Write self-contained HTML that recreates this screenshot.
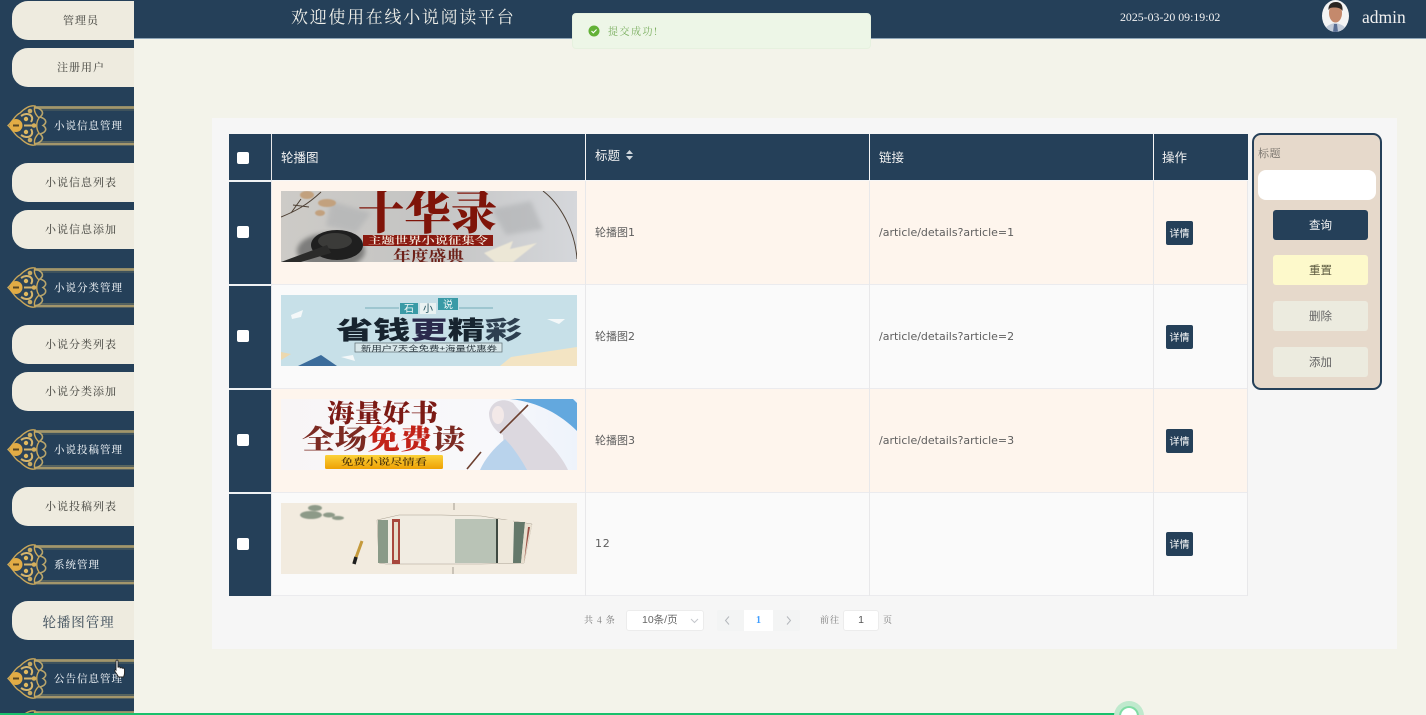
<!DOCTYPE html>
<html lang="zh"><head><meta charset="utf-8"><title>轮播图管理</title>
<style>
*{box-sizing:border-box}
html,body{margin:0;padding:0;width:1426px;height:715px;overflow:hidden;background:#f3f3ea;font-family:"Liberation Sans","Noto Sans CJK SC",sans-serif}
#root{position:relative;width:1426px;height:715px;overflow:hidden;background:#f3f3ea}
.a{position:absolute}
#side{left:0;top:0;width:134px;height:715px;background:#254059;overflow:hidden}
.pill{position:absolute;left:12px;width:122px;height:39px;background:#eeebdf;border-radius:16px 0 0 16px;text-align:center;padding-left:16px;font:500 11px/38px "Noto Serif CJK SC",serif;color:#55554f;letter-spacing:1px}
.orn{position:absolute;left:7px;width:127px;height:42px}
.orn span{position:absolute;left:47px;top:0;font:500 10.5px/41px "Noto Serif CJK SC",serif;color:#e9eef2;letter-spacing:1px;white-space:nowrap}
#head{left:134px;top:0;width:1292px;height:39px;background:#254059;border-bottom:1px solid #8fa6b8}
.th{position:absolute;top:134px;height:46px;background:#254059;color:#f1f1f1;font-size:12.5px;line-height:48px;padding-left:8px}
.rowbg{position:absolute;left:272px;width:976px;height:103px}
.sq{position:absolute;left:237px;width:12px;height:12px;background:#fff;border-radius:2px}
.cell{position:absolute;font:11px/16px "DejaVu Sans","Noto Sans CJK SC",sans-serif;color:#5e5e5e}
.det{position:absolute;left:1166px;width:27px;height:24px;background:#254059;border-radius:2px;color:#fff;font-size:10px;line-height:27px;text-align:center}
.btn{position:absolute;left:1273px;width:95px;height:30px;border-radius:3px;text-align:center;font-size:11.5px;line-height:32px}
.vl{position:absolute;width:1px;background:#e8e8ea}
</style></head><body><div id="root">

<svg width="0" height="0" style="position:absolute"><defs>
<g id="o" fill="none">
<path d="M27 2.500H127M27 39H127" stroke="#a3966b" stroke-width="2.800"/>
<path d="M33 5H127M33 36.500H127" stroke="#57655f" stroke-width="1"/>
<path d="M28 2C35 4 38 8 33 12C40 14 40 18 36 20.500C40 23 40 27 33 29C38 33 35 37 28 39" stroke="#b8a56c" stroke-width="1.600"/>
<path d="M1 20.500C6 16 8 10 13 8C18 3 23 0 28 1C26 6 29 10 32 13C29 17 29 24 32 28C29 31 26 35 28 40C23 41 18 38 13 33C8 31 6 25 1 20.500Z" fill="#2c4459" stroke="#c9a75a" stroke-width="1.400"/>
<circle cx="9" cy="20.500" r="6.500" fill="#e2ac45"/><rect x="6" y="19.500" width="6" height="2" fill="#5a4724"/>
<path d="M14 11C21 6 28 11 24 17M14 30C21 35 28 30 24 24M17 20.500H27" stroke="#d6b56c" stroke-width="2"/>
<circle cx="23" cy="6" r="2.300" fill="#c9ab62"/><circle cx="23" cy="35" r="2.300" fill="#c9ab62"/><circle cx="27" cy="20.500" r="2.300" fill="#d5af5c"/><circle cx="19" cy="14" r="2.200" fill="#e0b95f"/><circle cx="19" cy="27" r="2.200" fill="#e0b95f"/>
</g></defs></svg>

<div class="a" id="side">
<div class="pill" style="top:1px;line-height:39px">管理员</div>
<div class="pill" style="top:48px">注册用户</div>
<div class="orn" style="top:105px"><svg width="127" height="42"><use href="#o"/></svg><span>小说信息管理</span></div>
<div class="pill" style="top:163px">小说信息列表</div>
<div class="pill" style="top:210px">小说信息添加</div>
<div class="orn" style="top:267px"><svg width="127" height="42"><use href="#o"/></svg><span>小说分类管理</span></div>
<div class="pill" style="top:325px">小说分类列表</div>
<div class="pill" style="top:372px">小说分类添加</div>
<div class="orn" style="top:429px"><svg width="127" height="42"><use href="#o"/></svg><span>小说投稿管理</span></div>
<div class="pill" style="top:487px">小说投稿列表</div>
<div class="orn" style="top:544px"><svg width="127" height="42"><use href="#o"/></svg><span>系统管理</span></div>
<div class="pill" style="top:601px;font-size:13.500px;letter-spacing:.9px;color:#4d5b66;padding-left:11px;line-height:40px">轮播图管理</div>
<div class="orn" style="top:658px"><svg width="127" height="42"><use href="#o"/></svg><span>公告信息管理</span></div>
<div class="orn" style="top:710px;height:5px;overflow:hidden"><svg width="127" height="5" style="display:block"><use href="#o"/></svg></div>
</div>

<div class="a" id="head"></div>
<div class="a" style="left:291px;top:3px;font:17px/26px 'Noto Serif CJK SC',serif;color:#f0f0ea;letter-spacing:1.700px;white-space:nowrap">欢迎使用在线小说阅读平台</div>
<div class="a" style="left:1120px;top:9px;font:11.850px/17px 'Liberation Serif',serif;color:#f2f2f2;white-space:nowrap">2025-03-20 09:19:02</div>
<svg class="a" style="left:1322px;top:0" width="27" height="32" viewBox="0 0 27 32">
<defs><clipPath id="av"><ellipse cx="13.500" cy="16" rx="13.500" ry="16"/></clipPath></defs>
<rect width="27" height="32" fill="#f4f4f4" clip-path="url(#av)"/>
<g clip-path="url(#av)"><ellipse cx="13.500" cy="13" rx="6.500" ry="9.500" fill="#c4896c"/><path d="M6.500 10C6 4 10 2 14 2C19 2 21 5 20.500 11C19 7 11 7 8 8Z" fill="#2b2522"/><path d="M2 32C3 26 8 24 13 23C19 24 24 26 25 32Z" fill="#c3ccd9"/><path d="M12 24H15L16 32H11Z" fill="#5a6f94"/></g></svg>
<div class="a" style="left:1362px;top:5px;font:17.500px/24px 'Liberation Serif',serif;color:#f0f0f0">admin</div>

<div class="a" style="left:212px;top:118px;width:1185px;height:531px;background:#f6f6f6"></div>

<div class="a" style="left:229px;top:134px;width:43px;height:462px;background:#254059"></div>
<div class="a" style="left:229px;top:180px;width:43px;height:2px;background:#f0f2f4"></div>
<div class="a" style="left:229px;top:284px;width:43px;height:2px;background:#f0f2f4"></div>
<div class="a" style="left:229px;top:388px;width:43px;height:2px;background:#f0f2f4"></div>
<div class="a" style="left:229px;top:492px;width:43px;height:2px;background:#f0f2f4"></div>
<div class="a" style="left:271px;top:134px;width:1px;height:462px;background:#e8e8ea"></div>

<div class="th" style="left:272px;width:313px;padding-left:9px">轮播图</div>
<div class="th" style="left:586px;width:283px;line-height:45px;padding-left:9px">标题 <svg width="9" height="10" viewBox="0 0 9 10" style="margin-left:2px"><path d="M4.500 0L8 4H1ZM4.500 10L1 6H8Z" fill="#cfd6dc"/></svg></div>
<div class="th" style="left:870px;width:283px;padding-left:9px">链接</div>
<div class="th" style="left:1154px;width:94px">操作</div>

<div class="rowbg" style="top:181px;background:#fef5ed"></div>
<div class="rowbg" style="top:285px;background:#fafafa"></div>
<div class="rowbg" style="top:389px;background:#fef5ed"></div>
<div class="rowbg" style="top:493px;background:#fafafa"></div>
<div class="a" style="left:272px;top:284px;width:976px;height:1px;background:#ebebee"></div>
<div class="a" style="left:272px;top:388px;width:976px;height:1px;background:#ebebee"></div>
<div class="a" style="left:272px;top:492px;width:976px;height:1px;background:#ebebee"></div>
<div class="a" style="left:272px;top:595px;width:976px;height:1px;background:#ebebee"></div>
<div class="vl" style="left:585px;top:181px;height:415px"></div>
<div class="vl" style="left:869px;top:181px;height:415px"></div>
<div class="vl" style="left:1153px;top:181px;height:415px"></div>
<div class="vl" style="left:1247px;top:181px;height:415px"></div>

<div class="sq" style="top:152px"></div><div class="sq" style="top:226px"></div><div class="sq" style="top:330px"></div><div class="sq" style="top:434px"></div><div class="sq" style="top:538px"></div>

<!-- banner 1 -->
<svg class="a" style="left:281px;top:191px" width="296" height="71" viewBox="0 0 296 71">
<defs><linearGradient id="g1" x1="0" x2="1"><stop offset="0" stop-color="#cdcbc7"/><stop offset=".5" stop-color="#c4c4c3"/><stop offset="1" stop-color="#d5d7db"/></linearGradient><filter id="bl"><feGaussianBlur stdDeviation="2.500"/></filter><filter id="bl1"><feGaussianBlur stdDeviation=".6"/></filter></defs>
<rect width="296" height="71" fill="url(#g1)"/>
<path d="M50 10L90 22L75 42L45 35ZM210 18L250 10L262 38L225 44Z" fill="#aeb0b2" opacity=".6" filter="url(#bl)"/>
<path d="M0 26C15 20 26 14 40 1M12 14L28 16M20 8L10 22M262 0C278 12 294 38 296 68" stroke="#4e4034" stroke-width="1" fill="none"/>
<g fill="#c2a17e" filter="url(#bl1)"><ellipse cx="26" cy="4" rx="7" ry="4"/><ellipse cx="46" cy="12" rx="9" ry="4"/><ellipse cx="39" cy="22" rx="5" ry="3"/></g>
<ellipse cx="50" cy="60" rx="34" ry="18" fill="#7d7d7b" filter="url(#bl)"/><ellipse cx="56" cy="54" rx="26" ry="15" fill="#1f1f1f"/><ellipse cx="54" cy="50" rx="17" ry="8" fill="#3b3b39"/>
<path d="M0 71L46 54L50 62L20 71Z" fill="#2b2b2a"/>
<text x="77" y="38" font-family="'Noto Serif CJK SC',serif" font-weight="900" font-size="46" fill="#7f1409" textLength="139" lengthAdjust="spacingAndGlyphs">十华录</text>
<rect x="82" y="44" width="130" height="11" fill="#8a1a10"/>
<text x="147" y="53" text-anchor="middle" font-family="'Noto Serif CJK SC',serif" font-size="10" font-weight="600" fill="#f5eee2" textLength="120" lengthAdjust="spacingAndGlyphs">主题世界小说征集令</text>
<text x="112" y="71" font-family="'Noto Serif CJK SC',serif" font-weight="700" font-size="16" fill="#6d2018" textLength="71" lengthAdjust="spacingAndGlyphs">年度盛典</text>
<path d="M203 62L232 50L229 58L256 52L232 71H214Z" fill="#ece7d6" filter="url(#bl1)"/>
</svg>

<!-- banner 2 -->
<svg class="a" style="left:281px;top:295px" width="296" height="71" viewBox="0 0 296 71">
<rect width="296" height="71" fill="#c7e0e8"/>
<path d="M84 13H118M178 13H212" stroke="#5c9aa8" stroke-width=".8"/>
<rect x="119" y="8" width="18" height="11" fill="#399aa6"/><rect x="139" y="8" width="16" height="11" fill="#e9f2f2"/><rect x="157" y="3" width="20" height="12" fill="#399aa6"/>
<text x="123" y="17" font-size="10" fill="#f0f8f8" font-family="'Noto Sans CJK SC',sans-serif">石</text><text x="142" y="17" font-size="10" fill="#1d4f5c" font-family="'Noto Sans CJK SC',sans-serif">小</text><text x="162" y="13" font-size="10" fill="#f0f8f8" font-family="'Noto Sans CJK SC',sans-serif">说</text>
<text x="55" y="44" font-size="25" font-weight="900" fill="#17242f" textLength="186" lengthAdjust="spacingAndGlyphs" font-family="'Noto Sans CJK SC',sans-serif">省钱<tspan fill="#2b2a4c">更</tspan>精<tspan fill="#2e3f50">彩</tspan></text>
<rect x="74" y="48" width="147" height="9" fill="#d8e7ea" stroke="#5d6c72" stroke-width=".7"/>
<text x="148" y="56" text-anchor="middle" font-size="7.500" fill="#26343c" textLength="136" lengthAdjust="spacingAndGlyphs" font-family="'Noto Sans CJK SC',sans-serif">新用户7天全免费+海量优惠券</text>
<path d="M17 71L40 60L56 71Z" fill="#3b6c9b"/><path d="M0 57L10 59L0 65Z" fill="#ecd8ae"/>
<path d="M219 71L230 62L296 52V71Z" fill="#f3e4c3"/>
<path d="M10 20L22 15L20 22L11 24ZM266 24L284 24L278 29ZM60 62L72 60L74 66Z" fill="#f4f8f9"/>
</svg>

<!-- banner 3 -->
<svg class="a" style="left:281px;top:399px" width="296" height="71" viewBox="0 0 296 71">
<defs><linearGradient id="g3" x1="0" x2="1"><stop offset="0" stop-color="#f8f5f6"/><stop offset=".7" stop-color="#f8f8fb"/><stop offset="1" stop-color="#eef3fb"/></linearGradient><linearGradient id="gy" y1="0" y2="1" x1="0" x2="0"><stop offset="0" stop-color="#fcd23a"/><stop offset="1" stop-color="#eea105"/></linearGradient></defs>
<rect width="296" height="71" fill="url(#g3)"/>
<text x="46" y="23" font-family="'Noto Serif CJK SC',serif" font-weight="900" font-size="25" fill="#7c1a15" textLength="111" lengthAdjust="spacingAndGlyphs">海量好书</text>
<text x="21" y="50" font-family="'Noto Serif CJK SC',serif" font-weight="900" font-size="27" fill="#7c2a22" textLength="163" lengthAdjust="spacingAndGlyphs">全场<tspan fill="#c22318">免费</tspan>读</text>
<rect x="44" y="56" width="118" height="14" rx="1.500" fill="url(#gy)"/>
<text x="103" y="66" text-anchor="middle" font-family="'Noto Serif CJK SC',serif" font-size="9" font-weight="600" fill="#4a3208" textLength="86" lengthAdjust="spacingAndGlyphs">免费小说尽情看</text>
<path d="M229 0H292L296 4V32C280 16 258 3 229 0Z" fill="#63a8de"/>
<path d="M208 14C210 2 222 -2 232 4C240 14 252 26 264 40C276 52 284 64 287 71H232C228 60 222 46 222 36C214 32 208 24 208 14Z" fill="#dcd8df"/>
<path d="M199 71C204 60 212 50 224 40C232 48 240 60 246 71Z" fill="#b9d3ec"/>
<path d="M219 34L247 6M186 70L200 53" stroke="#6d4030" stroke-width="1.600"/>
<ellipse cx="217" cy="16" rx="6" ry="9" fill="#f3e9e8"/>
</svg>

<!-- banner 4 -->
<svg class="a" style="left:281px;top:503px" width="296" height="71" viewBox="0 0 296 71">
<rect width="296" height="71" fill="#f2ebdf"/>
<g fill="#8d9a88" filter="url(#bl1)"><ellipse cx="34" cy="5" rx="7" ry="3"/><ellipse cx="30" cy="12" rx="11" ry="4"/><ellipse cx="48" cy="12" rx="6" ry="2.500"/><ellipse cx="57" cy="15" rx="6" ry="2"/></g>
<path d="M96 17L118 12L160 12L200 13L251 21L243 60L200 61L105 61L98 60Z" fill="#f1ece2" stroke="#a89f90" stroke-width=".5"/>
<rect x="97" y="17" width="10" height="43" fill="#8a9a88"/><rect x="111" y="16" width="8" height="45" fill="#a8473d"/><rect x="113" y="19" width="4" height="38" fill="#e6ddcb"/>
<rect x="174" y="16" width="42" height="44" fill="#b9c3b6"/><rect x="215" y="16" width="2" height="44" fill="#3f4a42"/>
<rect x="217" y="17" width="15" height="43" fill="#eee8db"/>
<path d="M233 19H244L240 60H232Z" fill="#64786a"/>
<path d="M244 20L251 22L243 60H240Z" fill="#e8dfcf"/><path d="M247 24L249 24L243 59Z" fill="#9b5146"/>
<path d="M73 60L81 38" stroke="#c59a3c" stroke-width="3"/><path d="M73 61L75 54" stroke="#1e1e1e" stroke-width="3.500"/>
<path d="M173 0V7M172 64V71" stroke="#6d675c" stroke-width=".6"/>
</svg>

<div class="cell" style="left:595px;top:225px">轮播图1</div>
<div class="cell" style="left:595px;top:329px">轮播图2</div>
<div class="cell" style="left:595px;top:433px">轮播图3</div>
<div class="cell" style="left:595px;top:536px;letter-spacing:.8px">12</div>
<div class="cell" style="left:879px;top:225px">/article/details?article=1</div>
<div class="cell" style="left:879px;top:329px">/article/details?article=2</div>
<div class="cell" style="left:879px;top:433px">/article/details?article=3</div>
<div class="det" style="top:221px">详情</div><div class="det" style="top:325px">详情</div><div class="det" style="top:429px">详情</div><div class="det" style="top:532px">详情</div>

<!-- search panel -->
<div class="a" style="left:1252px;top:133px;width:130px;height:257px;background:#e6d9cb;border:2px solid #254059;border-radius:9px"></div>
<div class="a" style="left:1258px;top:145px;font:11px/16px 'Noto Serif CJK SC',serif;color:#6e6a64;letter-spacing:.5px">标题</div>
<div class="a" style="left:1258px;top:170px;width:118px;height:30px;background:#fff;border-radius:8px"></div>
<div class="btn" style="top:210px;background:#254059;color:#f3f3f3">查询</div>
<div class="btn" style="top:255px;background:#fdf9cb;color:#5c5a40">重置</div>
<div class="btn" style="top:301px;background:#ecebdf;color:#666">删除</div>
<div class="btn" style="top:347px;background:#ecebdf;color:#666">添加</div>

<!-- pagination -->
<div class="a" style="left:584px;top:612px;font:9px/16px 'Noto Serif CJK SC',serif;color:#777;letter-spacing:.8px;white-space:nowrap">共 4 条</div>
<div class="a" style="left:626px;top:610px;width:78px;height:21px;background:#fff;border:1px solid #ececec;border-radius:3px;font-size:10.500px;line-height:19px;color:#666;padding-left:15px">10条/页<svg class="a" style="left:63px;top:7px" width="9" height="6"><path d="M1 1L4.500 4.500L8 1" stroke="#c4c7cc" fill="none"/></svg></div>
<div class="a" style="left:717px;top:610px;width:83px;height:21px;background:#f3f4f4;border-radius:2px"></div>
<div class="a" style="left:744px;top:610px;width:29px;height:21px;background:#fff;color:#409eff;font:700 10px/21px 'Liberation Serif',serif;text-align:center">1</div>
<svg class="a" style="left:724px;top:615px" width="7" height="11"><path d="M5 1.500L1.500 5.500L5 9.500" stroke="#b4b7bc" fill="none"/></svg>
<svg class="a" style="left:785px;top:615px" width="7" height="11"><path d="M2 1.500L5.500 5.500L2 9.500" stroke="#b4b7bc" fill="none"/></svg>
<div class="a" style="left:820px;top:612px;font:9px/16px 'Noto Serif CJK SC',serif;color:#777;letter-spacing:1px">前往</div>
<div class="a" style="left:843px;top:610px;width:36px;height:21px;background:#fff;border:1px solid #ececec;border-radius:3px;font-size:10.500px;line-height:19px;color:#555;text-align:center">1</div>
<div class="a" style="left:883px;top:612px;font:9px/16px 'Noto Serif CJK SC',serif;color:#777">页</div>

<!-- toast -->
<div class="a" style="left:572px;top:13px;width:299px;height:36px;background:#edf6e7;border:1px solid #e6f1df;border-radius:4px"></div>
<svg class="a" style="left:588px;top:25px" width="12" height="12" viewBox="0 0 12 12"><circle cx="6" cy="6" r="5.500" fill="#62b136"/><path d="M3.500 6L5.300 7.800L8.600 4.500" stroke="#fff" stroke-width="1.100" fill="none"/></svg>
<div class="a" style="left:608px;top:23px;font:10px/16px 'Noto Serif CJK SC',serif;color:#78ad5c;letter-spacing:1.500px;white-space:nowrap">提交成功!</div>

<!-- hand cursor -->
<svg class="a" style="left:114px;top:659px" width="13" height="19" viewBox="0 0 13 19"><path d="M2 2C2 .8 4 .8 4 2V8.500C4.500 7.500 6 7.500 6.200 8.800C6.800 8 8 8.200 8.200 9.300C9 8.800 10.500 9 10.500 10.500V14C10.500 15.500 10 16.500 9.500 18H4.500C3.500 16 2.500 14.500 1 12.500C.3 11.300 1.300 10.200 2 11Z" fill="#fff" stroke="#222" stroke-width=".9"/></svg>

<!-- bottom bar -->
<div class="a" style="left:0;top:713px;width:1115px;height:2px;background:#18c06c"></div>
<svg class="a" style="left:1114px;top:701px;display:block" width="30" height="14" viewBox="0 0 30 14"><circle cx="15" cy="15" r="15" fill="#bfe9cd"/><circle cx="15" cy="15" r="10" fill="#7fdca4"/><circle cx="15" cy="15" r="8" fill="#fff"/></svg>
</div></body></html>
